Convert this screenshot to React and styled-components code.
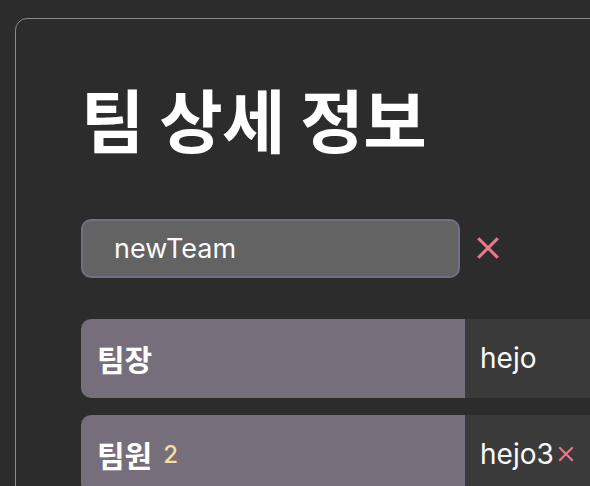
import React from 'react';
import styled, { createGlobalStyle } from 'styled-components';

const Global = createGlobalStyle`
  html, body { margin: 0; padding: 0; background: #2c2c2c; overflow: hidden; }
  body { font-family: 'Inter', 'Noto Sans CJK KR', sans-serif; color: #fff; }
`;

const Page = styled.div`
  padding: 18px 0 0 15px;
  width: 800px;
`;

const Card = styled.div`
  border: 1.5px solid #8a8a8a;
  border-radius: 12px;
  padding: 58px 66px 40px 65px;
  min-height: 600px;
  background: #2c2c2c;
`;

const Title = styled.h1`
  margin: 0 0 59px;
  font-family: 'Noto Sans CJK KR', sans-serif;
  font-size: 69px;
  font-weight: 700;
  line-height: 1.2;
  letter-spacing: -0.5px;
`;

const NameRow = styled.div`
  display: flex;
  align-items: center;
  gap: 15px;
  margin-bottom: 41px;
`;

const NameInput = styled.input`
  width: 379px;
  height: 59px;
  box-sizing: border-box;
  background: #636363;
  border: 2px solid #6e7282;
  border-radius: 10px;
  color: #fafafa;
  font-family: 'Inter', sans-serif;
  font-size: 27px;
  padding: 0 0 0 31px;
  outline: none;
`;

const CloseBtn = styled.button`
  background: none;
  border: 0;
  padding: 0;
  color: #e87a86;
  display: flex;
  cursor: pointer;
`;

const Table = styled.div`
  display: flex;
  flex-direction: column;
  gap: 17px;
`;

const Row = styled.div`
  display: flex;
  height: 79px;
`;

const Label = styled.div`
  width: 384px;
  background: #766f7b;
  border-radius: 10px 0 0 10px;
  display: flex;
  align-items: center;
  gap: 11px;
  padding-left: 16px;
  box-sizing: border-box;
  font-family: 'Noto Sans CJK KR', sans-serif;
  font-weight: 700;
  font-size: 30px;
`;

const Count = styled.span`
  color: #f0df9e;
  font-family: 'Inter', sans-serif;
  font-weight: 500;
  font-size: 24px;
`;

const Value = styled.div`
  flex: 1;
  background: #3a3a3a;
  display: flex;
  align-items: center;
  padding-left: 15px;
  gap: 3px;
  font-size: 28px;
  color: #fafafa;
`;

const XIcon = ({ size, w }) => (
  <svg width={size} height={size} viewBox="0 0 24 24" fill="none" stroke="currentColor" strokeWidth={w} strokeLinecap="square">
    <path d="M4 4L20 20M20 4L4 20" />
  </svg>
);

export default function App() {
  return (
    <>
      <Global />
      <Page>
        <Card>
          <Title>팀 상세 정보</Title>
          <NameRow>
            <NameInput defaultValue="newTeam" />
            <CloseBtn><XIcon size={26} w={2.8} /></CloseBtn>
          </NameRow>
          <Table>
            <Row>
              <Label>팀장</Label>
              <Value>hejo</Value>
            </Row>
            <Row>
              <Label>팀원 <Count>2</Count></Label>
              <Value>hejo3<CloseBtn><XIcon size={18} w={2.8} /></CloseBtn></Value>
            </Row>
          </Table>
        </Card>
      </Page>
    </>
  );
}
